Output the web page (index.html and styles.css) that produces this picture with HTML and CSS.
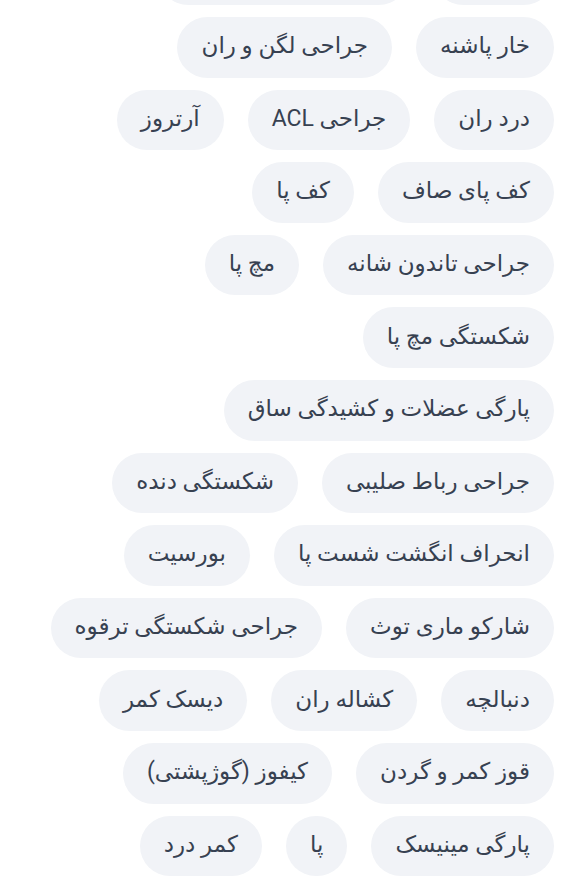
FILE: index.html
```html
<!DOCTYPE html>
<html lang="fa" dir="rtl">
<head>
<meta charset="utf-8">
<title>برچسب‌ها</title>
<link rel="stylesheet" href="styles.css">
</head>
<body>
<div class="tags">
  <div class="row">
    <span class="tag">درد زانو</span>
    <span class="tag">جراحی تعویض مفصل</span>
  </div>
  <div class="row">
    <span class="tag">خار پاشنه</span>
    <span class="tag">جراحی لگن و ران</span>
  </div>
  <div class="row">
    <span class="tag">درد ران</span>
    <span class="tag">جراحی ACL</span>
    <span class="tag">آرتروز</span>
  </div>
  <div class="row">
    <span class="tag">کف پای صاف</span>
    <span class="tag">کف پا</span>
  </div>
  <div class="row">
    <span class="tag">جراحی تاندون شانه</span>
    <span class="tag">مچ پا</span>
  </div>
  <div class="row">
    <span class="tag">شکستگی مچ پا</span>
  </div>
  <div class="row">
    <span class="tag">پارگی عضلات و کشیدگی ساق</span>
  </div>
  <div class="row">
    <span class="tag">جراحی رباط صلیبی</span>
    <span class="tag">شکستگی دنده</span>
  </div>
  <div class="row">
    <span class="tag">انحراف انگشت شست پا</span>
    <span class="tag">بورسیت</span>
  </div>
  <div class="row">
    <span class="tag">شارکو ماری توث</span>
    <span class="tag">جراحی شکستگی ترقوه</span>
  </div>
  <div class="row">
    <span class="tag">دنبالچه</span>
    <span class="tag">کشاله ران</span>
    <span class="tag">دیسک کمر</span>
  </div>
  <div class="row">
    <span class="tag">قوز کمر و گردن</span>
    <span class="tag">کیفوز (گوژپشتی)</span>
  </div>
  <div class="row">
    <span class="tag">پارگی مینیسک</span>
    <span class="tag">پا</span>
    <span class="tag">کمر درد</span>
  </div>
</div>
</body>
</html>
```

FILE: styles.css
```css
html, body {
  margin: 0;
  padding: 0;
  background: #ffffff;
}
body {
  font-family: Roboto, "DejaVu Sans", sans-serif;
  color: #374151;
  overflow: hidden;
}
.tags {
  display: flex;
  flex-direction: column;
  gap: 12px;
  padding: 0 28px;
  margin-top: -55.6px;
}
.row {
  display: flex;
  gap: 24px;
}
.tag {
  display: inline-flex;
  align-items: center;
  height: 60.6px;
  padding: 0 24px 2px;
  box-sizing: border-box;
  background: #f1f3f7;
  border-radius: 31px;
  font-size: 23px;
  line-height: 34px;
  white-space: nowrap;
}
```
